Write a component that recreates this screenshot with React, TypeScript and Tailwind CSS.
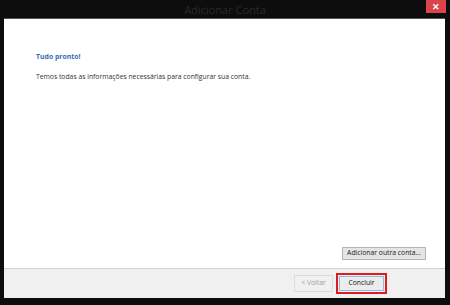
export default function App() {
  return (
    <div className="w-[450px] h-[305px] bg-[#0d0d0d] flex flex-col overflow-hidden" style={{ fontFamily: '"Open Sans", "Noto Sans", sans-serif' }}>
      <div className="h-[18px] relative flex items-center justify-center">
        <span className="text-[11px] text-[#2a2a2a] leading-none mt-[1px]">Adicionar Conta</span>
        <div className="absolute right-[4px] top-0 w-[20px] h-[13px] bg-[#d9454a] flex items-center justify-center">
          <span className="text-white text-[9px] font-bold leading-none">✕</span>
        </div>
      </div>
      <div className="mx-[4px] w-[441px] h-[250px] bg-white flex flex-col border-t border-[#555]">
        <div className="pl-[32px] pt-[35px] flex flex-col">
          <span className="text-[6.9px] font-bold text-[#3a6db3] leading-none">Tudo pronto!</span>
          <span className="text-[6.8px] text-[#333] leading-none mt-[13px]">Temos todas as informações necessárias para configurar sua conta.</span>
        </div>
        <div className="flex-1 flex items-end justify-end pr-[19px] pb-[8px]">
          <div className="w-[84px] h-[13px] border border-[#b5b5b5] bg-[#e4e4e4] flex items-center justify-center">
            <span className="text-[6.8px] text-[#222] leading-none">Adicionar outra conta...</span>
          </div>
        </div>
      </div>
      <div className="mx-[4px] w-[441px] h-[30px] bg-[#f0f0f0] border-t border-[#d0d0d0] flex items-center justify-end pr-[58px] gap-[3px]">
        <div className="w-[39px] h-[17px] border border-[#dcdcdc] bg-[#f0f0f0] flex items-center justify-center">
          <span className="text-[6.8px] text-[#a0a0a0] leading-none">&lt; Voltar</span>
        </div>
        <div className="w-[51px] h-[21px] border-2 border-[#e01b1b] flex items-center justify-center p-[1px]">
          <div className="w-full h-full border border-[#8fbbe6] bg-[#ececec] flex items-center justify-center">
            <span className="text-[6.8px] text-[#111] leading-none">Concluir</span>
          </div>
        </div>
      </div>
      <div className="flex-1" />
    </div>
  );
}
